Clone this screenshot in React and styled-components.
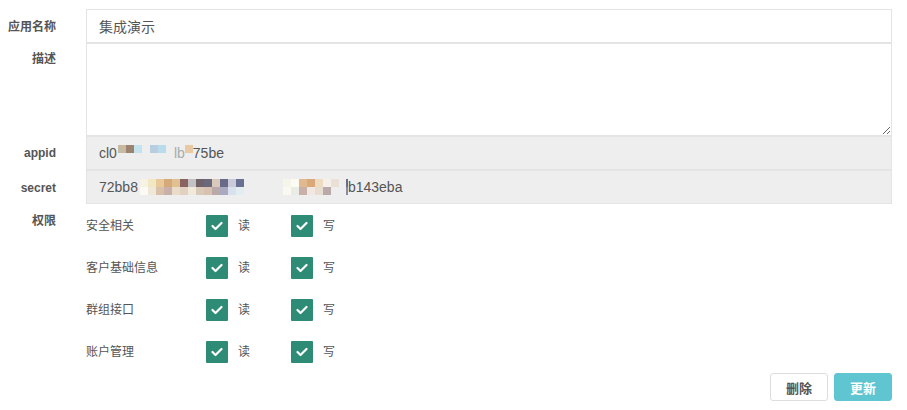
import React from 'react'
import styled, { createGlobalStyle } from 'styled-components'

const GlobalStyle = createGlobalStyle`
  body {
    margin: 0;
    background: #fff;
    font-family: "Liberation Sans", "Noto Sans CJK SC", sans-serif;
    color: #555;
  }
`

const Form = styled('form')`
  display: grid;
  grid-template-columns: 56px 1fr;
  column-gap: 30px;
  padding: 9px 15px 0 0;
`

const Label = styled('label')`
  text-align: right;
  font-size: 12px;
  font-weight: bold;
  line-height: 14px;
  padding-top: ${({ top }) => top || 10}px;
  color: #555;
`

const Field = styled('div')`
  box-sizing: border-box;
  height: 34px;
  border: 1px solid #e4e4e4;
  background: ${({ readOnly }) => (readOnly ? '#eeeeee' : '#fff')};
  display: flex;
  align-items: center;
  padding: 0 12px;
  font-size: 14px;
  color: #555;
  white-space: nowrap;
`

const TextArea = styled('textarea')`
  box-sizing: border-box;
  display: block;
  width: 100%;
  height: 93px;
  margin: 0;
  border: 1px solid #e4e4e4;
  outline: none;
  resize: vertical;
  font: inherit;
  padding: 6px 12px;
`

const Mosaic = styled('span')`
  display: inline-grid;
  grid-auto-flow: column;
  grid-template-rows: 8px 8px;
  grid-auto-columns: ${({ cell }) => cell || 8}px;
  margin: ${({ gap }) => gap || '0'};
  vertical-align: middle;
`

const Cell = styled('span')`
  background: ${({ c }) => c};
`

const Faint = styled('span')`
  color: #aaa;
  margin-left: 8px;
`

const Perms = styled('div')`
  display: flex;
  flex-direction: column;
  padding-top: 3px;
`

const PermRow = styled('div')`
  display: grid;
  grid-template-columns: 120px 85px 1fr;
  align-items: center;
  height: 42px;
  font-size: 12px;
  line-height: 14px;
  color: #555;
`

const PermName = styled('span')`
  margin-top: -4px;
`

const Check = styled('span')`
  display: flex;
  align-items: center;
  gap: 10px;
  font-size: 12px;
  span {
    margin-top: -4px;
  }
`

const Box = styled('span')`
  display: inline-flex;
  width: 22px;
  height: 22px;
  align-items: center;
  justify-content: center;
  background: #2e8c76;
  border-radius: 1px;
`

const Actions = styled('div')`
  grid-column: 1 / 3;
  display: flex;
  justify-content: flex-end;
  gap: 6px;
  margin-top: -2px;
`

const Button = styled('button')`
  box-sizing: border-box;
  height: 28px;
  padding: 0 15px;
  border-radius: 3px;
  border: 1px solid ${({ primary }) => (primary ? '#5fc6d1' : '#dddddd')};
  background: ${({ primary }) => (primary ? '#5fc6d1' : '#fff')};
  color: ${({ primary }) => (primary ? '#fff' : '#555')};
  font-family: "Liberation Sans", "Noto Sans CJK SC", sans-serif;
  font-size: 13px;
  font-weight: bold;
`

const mosaic = (top, bottom) => {
  const cells = []
  top.forEach((c, i) => {
    cells.push(<Cell key={`t${i}`} c={c} />)
    cells.push(<Cell key={`b${i}`} c={bottom[i] || 'transparent'} />)
  })
  return cells
}

const CheckIcon = () => (
  <svg width="12" height="10" viewBox="0 0 12 10">
    <polyline points="1.5,5 4.5,8 10.5,2" fill="none" stroke="#fff" strokeWidth="2.2" strokeLinecap="round" strokeLinejoin="round" />
  </svg>
)

const permissions = ['安全相关', '客户基础信息', '群组接口', '账户管理']

export default function App() {
  return (
    <>
      <GlobalStyle />
      <Form onSubmit={(e) => e.preventDefault()}>
        <Label top={11}>应用名称</Label>
        <Field>集成演示</Field>

        <Label top={9}>描述</Label>
        <TextArea />

        <Label>appid</Label>
        <Field readOnly>
          cl0
          <Mosaic gap="0 0 0 1px">
            {mosaic(['#c8b9a2', '#9c8370', '#c4e3ee'], [])}
          </Mosaic>
          <Mosaic gap="0 0 0 8px">{mosaic(['#b9cde1', '#b9dcec'], [])}</Mosaic>
          <Faint>lb</Faint>
          <Mosaic>{mosaic(['#e9c9a2'], [])}</Mosaic>
          75be
        </Field>

        <Label top={11}>secret</Label>
        <Field readOnly>
          72bb8
          <Mosaic gap="0 0 0 2px">
            {mosaic(
              ['#f6f2e4', '#f1e7c3', '#e8c999', '#d5a97a', '#e1c192', '#8b6262', '#c2c2c2', '#716169', '#69697a', '#d9c9ba', '#69698a', '#cacada', '#697193'],
              ['#fbfaf4', '#efe8d8', '#d9c1a9', '#c9b1a9', '#e9ddc9', '#e1d1c1', '#f1e9d9', '#d9c9b9', '#d9c1b1', '#b9a9a9', '#a9a9c1', '#d9e1ed', '#e1edf1']
            )}
          </Mosaic>
          <Mosaic gap="0 0 0 39px">
            {mosaic(
              ['#f5f5ea', '#fbfbf3', '#e1b991', '#d9a979', '#eddcc1', '#f5f0e9', '#e9e1d5'],
              ['#f9f9f1', '#e9ede5', '#c9b1a9', '#f1e9e1', '#e9ddd1', '#b9a9a9', '#eeeeee']
            )}
          </Mosaic>
          <Mosaic gap="0 0 0 7px" cell={2}>
            {mosaic(['#6b6b8e'], ['#8a8aa6'])}
          </Mosaic>
          b143eba
        </Field>

        <Label top={10}>权限</Label>
        <Perms>
          {permissions.map((p) => (
            <PermRow key={p}>
              <PermName>{p}</PermName>
              <Check>
                <Box>
                  <CheckIcon />
                </Box>
                <span>读</span>
              </Check>
              <Check>
                <Box>
                  <CheckIcon />
                </Box>
                <span>写</span>
              </Check>
            </PermRow>
          ))}
        </Perms>

        <Actions>
          <Button type="button">删除</Button>
          <Button type="submit" primary>
            更新
          </Button>
        </Actions>
      </Form>
    </>
  )
}
